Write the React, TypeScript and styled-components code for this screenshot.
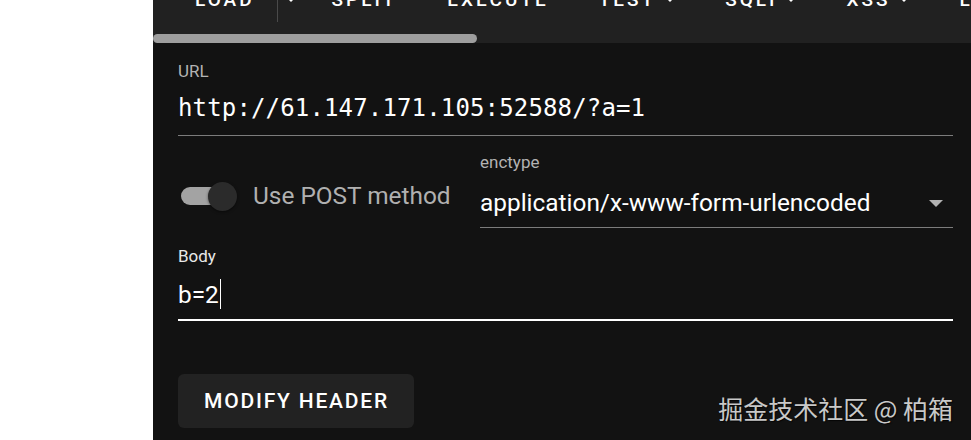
import React from 'react';
import styled, { createGlobalStyle } from 'styled-components';

const GlobalStyle = createGlobalStyle`
  html, body {
    margin: 0;
    padding: 0;
    background: #ffffff;
  }
  body {
    font-family: Roboto, "Noto Sans", sans-serif;
    overflow: hidden;
  }
`;

const Page = styled.div`
  position: relative;
  display: grid;
  grid-template-columns: 153px 1fr;
  width: 971px;
  height: 440px;
  overflow: hidden;
  background: #ffffff;
`;

const Gutter = styled.div`
  background: #ffffff;
`;

const Panel = styled.main`
  display: flex;
  flex-direction: column;
  min-width: 0;
  overflow: hidden;
  background: #121212;
`;

const Toolbar = styled.nav`
  display: flex;
  flex-direction: column;
  overflow: hidden;
  background: #212121;
`;

const TabRow = styled.div`
  display: flex;
  align-items: center;
  height: 46px;
  margin-top: -24px;
  padding-left: 16px;
  white-space: nowrap;
`;

const Tab = styled.button<{ $pl?: number; $pr?: number }>`
  display: flex;
  align-items: center;
  height: 100%;
  margin: 0;
  padding: 0 ${(p) => p.$pr ?? 25}px 0 ${(p) => p.$pl ?? 25}px;
  border: 0;
  background: none;
  color: #ffffff;
  font-family: Roboto, sans-serif;
  font-weight: 500;
  font-size: 19px;
  letter-spacing: 3px;
  text-transform: uppercase;
  flex-shrink: 0;
`;

const TabDivider = styled.span`
  align-self: flex-start;
  width: 1px;
  height: 46px;
  background: #4a4a4a;
  flex-shrink: 0;
`;

const CaretIcon = styled.svg<{ $gap?: number }>`
  width: 10px;
  height: 5px;
  margin-left: ${(p) => p.$gap ?? 0}px;
  fill: #ffffff;
  flex-shrink: 0;
`;

const ScrollTrack = styled.div`
  display: flex;
  height: 9px;
  margin-top: 12px;
`;

const ScrollThumb = styled.div`
  width: 324px;
  height: 100%;
  border-radius: 5px;
  background: #9e9e9e;
`;

const Form = styled.form`
  display: flex;
  flex-direction: column;
  padding: 18px 18px 0 25px;
`;

const Field = styled.div<{ $mt?: number }>`
  display: flex;
  flex-direction: column;
  margin-top: ${(p) => p.$mt ?? 0}px;
  min-width: 0;
`;

const Label = styled.label<{ $focused?: boolean }>`
  font-family: Roboto, sans-serif;
  font-size: 17px;
  line-height: 20px;
  color: ${(p) => (p.$focused ? '#e8e8e8' : '#b3b3b3')};
`;

const InputBox = styled.div<{ $mt: number; $pb: number; $focused?: boolean; $mono?: boolean }>`
  display: flex;
  align-items: center;
  justify-content: ${(p) => (p.$focused ? 'flex-start' : 'space-between')};
  margin-top: ${(p) => p.$mt}px;
  padding-bottom: ${(p) => p.$pb}px;
  border-bottom: ${(p) => (p.$focused ? '2px solid #ffffff' : '1px solid #7c7c7c')};
  font-family: ${(p) => (p.$mono ? '"DejaVu Sans Mono", "Liberation Mono", monospace' : 'Roboto, sans-serif')};
  font-size: ${(p) => (p.$mono ? '24px' : '24.4px')};
  letter-spacing: ${(p) => (p.$mono ? '0.15px' : '0')};
  line-height: 32px;
  color: #ffffff;
  white-space: nowrap;
`;

const Caret = styled.span`
  display: inline-block;
  width: 1px;
  height: 30px;
  margin-left: 1px;
  vertical-align: -6px;
  background: #ffffff;
`;

const OptionsRow = styled.div`
  display: grid;
  grid-template-columns: 302px 1fr;
  align-items: end;
  margin-top: 16px;
`;

const SwitchLabel = styled.div`
  display: flex;
  align-items: center;
  gap: 16px;
  margin-bottom: 16px;
  padding-left: 3px;
  font-family: Roboto, sans-serif;
  font-size: 24.4px;
  line-height: 32px;
  color: #b0b0b0;
  white-space: nowrap;
`;

const Switch = styled.span`
  display: flex;
  align-items: center;
`;

const SwitchTrack = styled.span`
  width: 50px;
  height: 18px;
  border-radius: 9px;
  background: #a3a3a3;
`;

const SwitchThumb = styled.span`
  width: 29px;
  height: 29px;
  margin-left: -23px;
  border-radius: 50%;
  background: #2b2b2b;
  box-shadow: 0 1px 3px rgba(0, 0, 0, 0.5);
`;

const SelectArrow = styled.svg`
  width: 14px;
  height: 7px;
  margin-right: 10px;
  fill: #b3b3b3;
  flex-shrink: 0;
`;

const ActionButton = styled.button`
  align-self: flex-start;
  height: 54px;
  margin-top: 53px;
  padding: 0 25px 0 26px;
  border: 0;
  border-radius: 6px;
  background: #222222;
  color: #ffffff;
  font-family: Roboto, sans-serif;
  font-weight: 500;
  font-size: 21px;
  letter-spacing: 1.8px;
  text-transform: uppercase;
`;

const Watermark = styled.div`
  position: absolute;
  right: 18px;
  bottom: 20px;
  font-family: "Noto Sans CJK SC", "Noto Sans", sans-serif;
  font-size: 25px;
  line-height: 24px;
  color: rgba(255, 255, 255, 0.78);
  text-shadow: 1px 1px 1px rgba(0, 0, 0, 0.7);
  white-space: nowrap;
`;

const Tri = ({ gap }: { gap?: number }) => (
  <CaretIcon $gap={gap} viewBox="0 0 10 5">
    <path d="M0 0 L10 0 L5 5 Z" />
  </CaretIcon>
);

export default function App() {
  return (
    <>
      <GlobalStyle />
      <Page>
        <Gutter />
        <Panel>
          <Toolbar>
            <TabRow>
              <Tab $pl={26} $pr={22}>Load</Tab>
              <TabDivider />
              <Tab $pl={8} $pr={11}>
                <Tri />
              </Tab>
              <Tab>Split</Tab>
              <Tab>Execute</Tab>
              <Tab>
                Test
                <Tri gap={9} />
              </Tab>
              <Tab>
                SQLI
                <Tri gap={9} />
              </Tab>
              <Tab>
                XSS
                <Tri gap={9} />
              </Tab>
              <Tab>LFI</Tab>
            </TabRow>
            <ScrollTrack>
              <ScrollThumb />
            </ScrollTrack>
          </Toolbar>
          <Form>
            <Field>
              <Label>URL</Label>
              <InputBox $mt={11} $pb={11} $mono>
                http://61.147.171.105:52588/?a=1
              </InputBox>
            </Field>
            <OptionsRow>
              <SwitchLabel>
                <Switch>
                  <SwitchTrack />
                  <SwitchThumb />
                </Switch>
                Use POST method
              </SwitchLabel>
              <Field>
                <Label>enctype</Label>
                <InputBox $mt={15} $pb={8}>
                  application/x-www-form-urlencoded
                  <SelectArrow viewBox="0 0 14 7">
                    <path d="M0 0 L14 0 L7 7 Z" />
                  </SelectArrow>
                </InputBox>
              </Field>
            </OptionsRow>
            <Field $mt={18}>
              <Label $focused>Body</Label>
              <InputBox $mt={13} $pb={8} $focused>
                <span>
                  b=2
                  <Caret />
                </span>
              </InputBox>
            </Field>
            <ActionButton type="button">Modify Header</ActionButton>
          </Form>
        </Panel>
        <Watermark>掘金技术社区 @ 柏箱</Watermark>
      </Page>
    </>
  );
}
